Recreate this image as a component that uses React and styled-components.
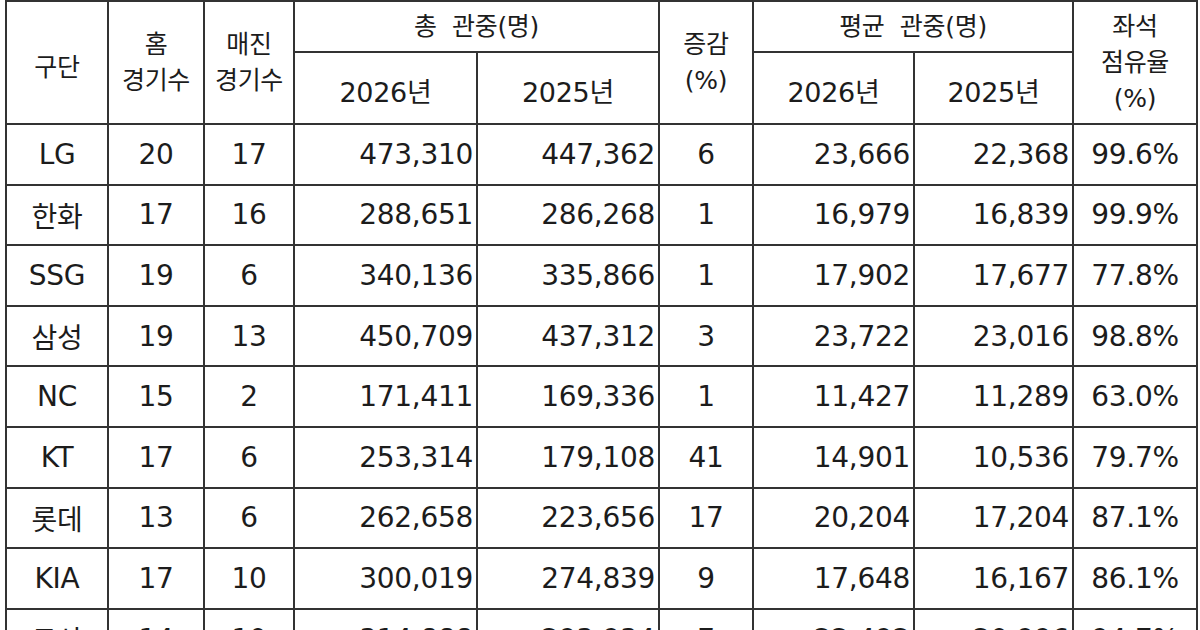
import React from "react";
import styled, { createGlobalStyle } from "styled-components";

const GlobalStyle = createGlobalStyle`
  html, body {
    margin: 0;
    padding: 0;
    background: #fff;
  }
  body {
    font-family: "DejaVu Sans", "Noto Sans CJK KR", sans-serif;
    color: #1c1c1c;
  }
`;

const Page = styled.div`
  width: 1200px;
  height: 630px;
  overflow: hidden;
  padding-left: 5px;
  box-sizing: border-box;
`;

const Table = styled.table`
  border-collapse: collapse;
  table-layout: fixed;
  width: 1192px;
  border: 2px solid #333;
`;

const HeadCell = styled.th`
  border: 2px solid #333;
  font-weight: 400;
  font-size: ${(p) => (p.$year ? "27px" : "25px")};
  line-height: 36px;
  text-align: center;
  vertical-align: middle;
  padding: ${(p) => (p.$drop ? "10px 0 0" : "0")};
  color: #1c1c1c;
  letter-spacing: -0.3px;
`;

const Cell = styled.td`
  border: 2px solid #333;
  font-size: 28px;
  text-align: ${(p) => (p.$num ? "right" : "center")};
  padding: 0 ${(p) => (p.$num ? "3px" : "0")} 0 0;
  vertical-align: middle;
  color: #1c1c1c;
  letter-spacing: -0.3px;
`;

const HeadRow = styled.tr`
  height: ${(p) => p.$h}px;
`;

const BodyRow = styled.tr`
  height: 60.6px;
`;

const widths = [102, 96, 90, 183, 182, 94, 161, 159, 124];

const rows = [
  ["LG", "20", "17", "473,310", "447,362", "6", "23,666", "22,368", "99.6%"],
  ["한화", "17", "16", "288,651", "286,268", "1", "16,979", "16,839", "99.9%"],
  ["SSG", "19", "6", "340,136", "335,866", "1", "17,902", "17,677", "77.8%"],
  ["삼성", "19", "13", "450,709", "437,312", "3", "23,722", "23,016", "98.8%"],
  ["NC", "15", "2", "171,411", "169,336", "1", "11,427", "11,289", "63.0%"],
  ["KT", "17", "6", "253,314", "179,108", "41", "14,901", "10,536", "79.7%"],
  ["롯데", "13", "6", "262,658", "223,656", "17", "20,204", "17,204", "87.1%"],
  ["KIA", "17", "10", "300,019", "274,839", "9", "17,648", "16,167", "86.1%"],
  ["두산", "14", "10", "314,888", "293,934", "7", "22,492", "20,996", "94.7%"],
];

const numericCols = [3, 4, 6, 7];

export default function App() {
  return (
    <>
      <GlobalStyle />
      <Page>
        <Table>
          <colgroup>
            {widths.map((w, i) => (
              <col key={i} style={{ width: w }} />
            ))}
          </colgroup>
          <thead>
            <HeadRow $h={51}>
              <HeadCell rowSpan={2} $drop>구단</HeadCell>
              <HeadCell rowSpan={2}>
                홈<br />경기수
              </HeadCell>
              <HeadCell rowSpan={2}>
                매진<br />경기수
              </HeadCell>
              <HeadCell colSpan={2}>총&nbsp; 관중(명)</HeadCell>
              <HeadCell rowSpan={2}>
                증감<br />(%)
              </HeadCell>
              <HeadCell colSpan={2}>평균&nbsp; 관중(명)</HeadCell>
              <HeadCell rowSpan={2}>
                좌석<br />점유율<br />(%)
              </HeadCell>
            </HeadRow>
            <HeadRow $h={72}>
              <HeadCell $drop $year>2026년</HeadCell>
              <HeadCell $drop $year>2025년</HeadCell>
              <HeadCell $drop $year>2026년</HeadCell>
              <HeadCell $drop $year>2025년</HeadCell>
            </HeadRow>
          </thead>
          <tbody>
            {rows.map((r) => (
              <BodyRow key={r[0]}>
                {r.map((v, i) => (
                  <Cell key={i} $num={numericCols.includes(i)}>
                    {v}
                  </Cell>
                ))}
              </BodyRow>
            ))}
          </tbody>
        </Table>
      </Page>
    </>
  );
}
